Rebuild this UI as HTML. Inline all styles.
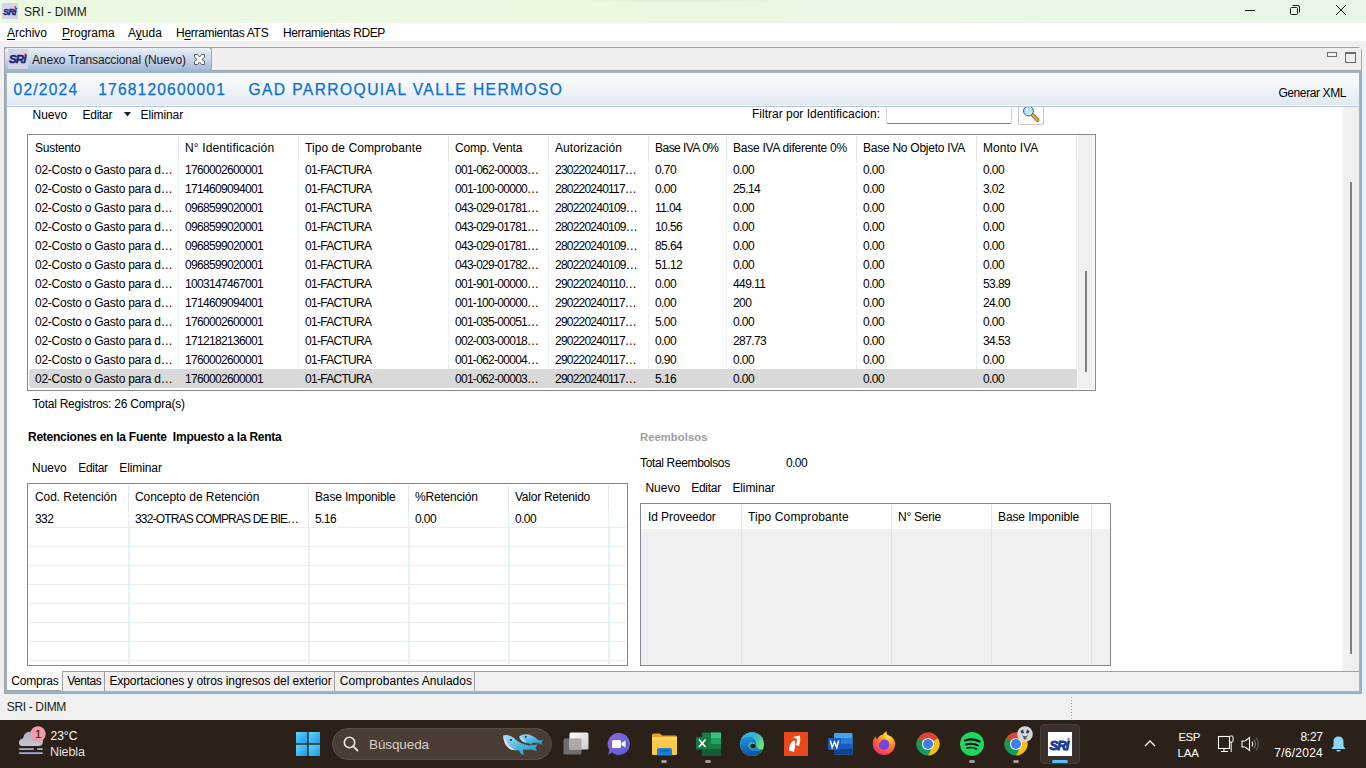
<!DOCTYPE html><html><head><meta charset="utf-8"><style>
html,body{margin:0;padding:0;width:1366px;height:768px;overflow:hidden;background:#f0f0f0;position:relative}
.t{position:absolute;white-space:nowrap;line-height:1;font-family:"Liberation Sans",sans-serif;color:#000}
.r{position:absolute;box-sizing:border-box}
svg{position:absolute;overflow:visible}
</style></head><body>
<div class="r" style="left:0px;top:0px;width:1366px;height:23px;background:linear-gradient(90deg,#ecf8e2,#edf8e1 45%,#eaf6e6 80%,#e9f5e9);"></div>
<div class="r" style="left:570px;top:0px;width:220px;height:3px;background:radial-gradient(ellipse at 50% 0%,rgba(0,0,0,0.06),rgba(0,0,0,0) 70%);"></div>
<svg style="left:2px;top:3px" width="16" height="16" viewBox="0 0 16 16"><rect x="0" y="0" width="16" height="16" fill="#d4d4e6"/><text x="1" y="11.5" font-family="Liberation Sans" font-weight="bold" font-style="italic" font-size="9" fill="#1a2278" stroke="#1a2278" stroke-width="0.4" letter-spacing="-0.7">SRi</text><circle cx="13.2" cy="4" r="0.9" fill="#e0302a"/></svg>
<div class="t" style="left:24px;top:5.84px;font-size:12px;color:#1a1a1a;">SRI - DIMM</div>
<div class="r" style="left:1245px;top:10px;width:10px;height:1px;background:#1a1a1a;"></div>
<svg style="left:1289px;top:4px" width="12" height="12" viewBox="0 0 12 12"><rect x="1.5" y="3.5" width="7" height="7" rx="1" fill="none" stroke="#1a1a1a" stroke-width="1"/><path d="M3.5 1.5 H9 Q10.5 1.5 10.5 3 V8.5" fill="none" stroke="#1a1a1a" stroke-width="1"/></svg>
<svg style="left:1336px;top:5px" width="10" height="10" viewBox="0 0 10 10"><path d="M0 0 L10 10 M10 0 L0 10" stroke="#1a1a1a" stroke-width="1"/></svg>
<div class="r" style="left:0px;top:23px;width:1366px;height:18px;background:#fff;"></div>
<div class="t" style="left:7px;top:26.84px;font-size:12px;"><u style="text-underline-offset:2px">A</u>rchivo</div>
<div class="t" style="left:62px;top:26.84px;font-size:12px;"><u style="text-underline-offset:2px">P</u>rograma</div>
<div class="t" style="left:128px;top:26.84px;font-size:12px;">A<u style="text-underline-offset:2px">y</u>uda</div>
<div class="t" style="left:176px;top:26.84px;font-size:12px;letter-spacing:-0.3px;">H<u style="text-underline-offset:2px">e</u>rramientas ATS</div>
<div class="t" style="left:283px;top:26.84px;font-size:12px;letter-spacing:-0.4px;">Herramientas RDEP</div>
<div class="r" style="left:4px;top:47px;width:1358px;height:647px;border:1px solid #a3a3a3;border-top-right-radius:4px;"></div>
<div class="r" style="left:5px;top:48px;width:1356px;height:23px;background:#efefef;"></div>
<div class="r" style="left:4px;top:47px;width:208px;height:25px;border-left:1px solid #a3a3a3;border-top:1px solid #a3a3a3;border-right:1px solid #a3a3a3;border-top-left-radius:3px;border-top-right-radius:3px;background:linear-gradient(#e9f0f9,#c6d5e8 50%,#9ab3d3);"></div>
<svg style="left:8px;top:49px" width="20" height="20" viewBox="0 0 20 20"><rect x="0" y="0" width="20" height="20" fill="#d6d3e3"/><text x="1" y="14.3" font-family="Liberation Sans" font-weight="bold" font-style="italic" font-size="11.5" fill="#1a2278" stroke="#1a2278" stroke-width="0.5" letter-spacing="-0.9">SRi</text><circle cx="17.3" cy="5.6" r="1.1" fill="#e0302a"/></svg>
<div class="t" style="left:32px;top:53.84px;font-size:12px;color:#1a1a1a;letter-spacing:-0.13px;">Anexo Transaccional (Nuevo)</div>
<svg style="left:194px;top:54px" width="11" height="11" viewBox="-0.5 -0.5 11 11"><path d="M0 0 H3 L5 2.6 L7 0 H10 V3 L7.4 5 L10 7 V10 H7 L5 7.4 L3 10 H0 V7 L2.6 5 L0 3 Z" fill="#fff" stroke="#5c5c5c" stroke-width="1" stroke-linejoin="miter"/></svg>
<div class="r" style="left:211px;top:70px;width:1150px;height:1px;background:#a3a3a3;"></div>
<div class="r" style="left:1327px;top:52px;width:10px;height:5px;border:1px solid #6a6a6a;"></div>
<div class="r" style="left:1345px;top:52px;width:11px;height:11px;border:1px solid #6a6a6a;border-top-width:2px;"></div>
<div class="r" style="left:5px;top:71px;width:1356px;height:622px;border:2px solid #99b4d1;border-bottom-width:2px;"></div>
<div class="r" style="left:7px;top:73px;width:1352px;height:32px;background:linear-gradient(#fdfeff,#f3f6fa 40%,#e3e9f2);"></div>
<div class="r" style="left:7px;top:105px;width:1352px;height:1px;background:#fbfcfe;"></div>
<div class="r" style="left:7px;top:106px;width:1352px;height:1px;background:#b2c7dd;"></div>
<div class="t" style="left:13.6px;top:82.29px;font-size:15.6px;color:#0a70d4;letter-spacing:1.2px;-webkit-text-stroke:0.25px #0a70d4;">02/2024</div>
<div class="t" style="left:98.3px;top:82.29px;font-size:15.6px;color:#0a70d4;letter-spacing:1.15px;-webkit-text-stroke:0.25px #0a70d4;">1768120600001</div>
<div class="t" style="left:248.4px;top:82.29px;font-size:15.6px;color:#0a70d4;letter-spacing:1.42px;-webkit-text-stroke:0.25px #0a70d4;">GAD PARROQUIAL VALLE HERMOSO</div>
<div class="t" style="left:1278.4px;top:86.84px;font-size:12px;letter-spacing:-0.4px;">Generar XML</div>
<div class="r" style="left:7px;top:107px;width:1336px;height:564px;background:#fff;"></div>
<div class="r" style="left:1343px;top:107px;width:16px;height:564px;background:#f0f0f0;"></div>
<div class="r" style="left:1350px;top:182px;width:2px;height:472px;background:#808080;"></div>
<div class="t" style="left:32.5px;top:108.84px;font-size:12px;">Nuevo</div>
<div class="t" style="left:82.6px;top:108.84px;font-size:12px;letter-spacing:-0.3px;">Editar</div>
<svg style="left:124px;top:112px" width="8" height="5" viewBox="0 0 8 5"><path d="M0 0 H7 L3.5 4.5 Z" fill="#222"/></svg>
<div class="t" style="left:140.5px;top:108.84px;font-size:12px;letter-spacing:-0.1px;">Eliminar</div>
<div class="t" style="left:752px;top:107.84px;font-size:12px;">Filtrar por Identificacion:</div>
<div class="r" style="left:886px;top:107px;width:126px;height:17px;background:#fff;border-left:1px solid #d5d5d5;border-right:1px solid #d5d5d5;border-bottom:1px solid #7a7a7a;border-bottom-left-radius:2px;border-bottom-right-radius:2px;"></div>
<div class="r" style="left:1018px;top:107px;width:26px;height:18px;background:#fdfdfd;border-left:1px solid #c8c8c8;border-right:1px solid #c8c8c8;border-bottom:1px solid #c8c8c8;border-bottom-left-radius:3px;border-bottom-right-radius:3px;"></div>
<div style="position:absolute;left:1010px;top:107px;width:40px;height:20px;overflow:hidden"><svg style="left:10px;top:-3px" width="22" height="20" viewBox="0 0 22 20"><defs><linearGradient id="mg" x1="0" y1="0" x2="1" y2="1"><stop offset="0" stop-color="#7fd0f6"/><stop offset="1" stop-color="#d8f8fc"/></linearGradient></defs><path d="M12.4 10.8 L17.6 16" stroke="#7a4a10" stroke-width="3.6" stroke-linecap="round"/><path d="M12.4 10.8 L17.6 16" stroke="#f0b040" stroke-width="2.2" stroke-linecap="round"/><circle cx="8.4" cy="7" r="4.9" fill="url(#mg)" stroke="#4b5b85" stroke-width="1"/><circle cx="7" cy="5.5" r="1.5" fill="#fff" opacity="0.6"/></svg></div>
<div class="r" style="left:27px;top:134px;width:1069px;height:257px;background:#fff;border:1px solid #828790;"></div>
<div class="t" style="left:35px;top:141.84px;font-size:12px;letter-spacing:-0.25px;">Sustento</div>
<div class="t" style="left:185px;top:141.84px;font-size:12px;letter-spacing:0.14px;">N° Identificación</div>
<div class="t" style="left:305px;top:141.84px;font-size:12px;letter-spacing:0.07px;">Tipo de Comprobante</div>
<div class="t" style="left:455px;top:141.84px;font-size:12px;letter-spacing:-0.2px;">Comp. Venta</div>
<div class="t" style="left:555px;top:141.84px;font-size:12px;letter-spacing:0.07px;">Autorización</div>
<div class="t" style="left:655px;top:141.84px;font-size:12px;letter-spacing:-0.52px;">Base IVA 0%</div>
<div class="t" style="left:733px;top:141.84px;font-size:12px;letter-spacing:-0.25px;">Base IVA diferente 0%</div>
<div class="t" style="left:863px;top:141.84px;font-size:12px;letter-spacing:-0.25px;">Base No Objeto IVA</div>
<div class="t" style="left:983px;top:141.84px;font-size:12px;letter-spacing:0.03px;">Monto IVA</div>
<div class="r" style="left:178px;top:136px;width:1px;height:24px;background:#e5e5e5;"></div>
<div class="r" style="left:178px;top:160px;width:1px;height:229px;background:#eaf2fb;"></div>
<div class="r" style="left:298px;top:136px;width:1px;height:24px;background:#e5e5e5;"></div>
<div class="r" style="left:298px;top:160px;width:1px;height:229px;background:#eaf2fb;"></div>
<div class="r" style="left:448px;top:136px;width:1px;height:24px;background:#e5e5e5;"></div>
<div class="r" style="left:448px;top:160px;width:1px;height:229px;background:#eaf2fb;"></div>
<div class="r" style="left:548px;top:136px;width:1px;height:24px;background:#e5e5e5;"></div>
<div class="r" style="left:548px;top:160px;width:1px;height:229px;background:#eaf2fb;"></div>
<div class="r" style="left:648px;top:136px;width:1px;height:24px;background:#e5e5e5;"></div>
<div class="r" style="left:648px;top:160px;width:1px;height:229px;background:#eaf2fb;"></div>
<div class="r" style="left:726px;top:136px;width:1px;height:24px;background:#e5e5e5;"></div>
<div class="r" style="left:726px;top:160px;width:1px;height:229px;background:#eaf2fb;"></div>
<div class="r" style="left:856px;top:136px;width:1px;height:24px;background:#e5e5e5;"></div>
<div class="r" style="left:856px;top:160px;width:1px;height:229px;background:#eaf2fb;"></div>
<div class="r" style="left:976px;top:136px;width:1px;height:24px;background:#e5e5e5;"></div>
<div class="r" style="left:976px;top:160px;width:1px;height:229px;background:#eaf2fb;"></div>
<div class="r" style="left:1076px;top:136px;width:1px;height:24px;background:#e5e5e5;"></div>
<div class="r" style="left:1076px;top:160px;width:1px;height:229px;background:#eaf2fb;"></div>
<div class="r" style="left:1078px;top:135px;width:16px;height:254px;background:#f0f0f0;"></div>
<div class="r" style="left:1085px;top:271px;width:2px;height:101px;background:#808080;"></div>
<div class="r" style="left:29px;top:369px;width:1048px;height:19px;background:#d9d9d9;border-radius:3px 0 0 3px;"></div>
<div class="t" style="left:35px;top:163.84px;font-size:12px;letter-spacing:-0.25px;">02-Costo o Gasto para d…</div>
<div class="t" style="left:185px;top:163.84px;font-size:12px;letter-spacing:-0.68px;">1760002600001</div>
<div class="t" style="left:305px;top:163.84px;font-size:12px;letter-spacing:-0.7px;">01-FACTURA</div>
<div class="t" style="left:455px;top:163.84px;font-size:12px;letter-spacing:-0.72px;">001-062-00003…</div>
<div class="t" style="left:555px;top:163.84px;font-size:12px;letter-spacing:-0.78px;">230220240117…</div>
<div class="t" style="left:655px;top:163.84px;font-size:12px;letter-spacing:-0.6px;">0.70</div>
<div class="t" style="left:733px;top:163.84px;font-size:12px;letter-spacing:-0.6px;">0.00</div>
<div class="t" style="left:863px;top:163.84px;font-size:12px;letter-spacing:-0.6px;">0.00</div>
<div class="t" style="left:983px;top:163.84px;font-size:12px;letter-spacing:-0.6px;">0.00</div>
<div class="t" style="left:35px;top:182.84px;font-size:12px;letter-spacing:-0.25px;">02-Costo o Gasto para d…</div>
<div class="t" style="left:185px;top:182.84px;font-size:12px;letter-spacing:-0.68px;">1714609094001</div>
<div class="t" style="left:305px;top:182.84px;font-size:12px;letter-spacing:-0.7px;">01-FACTURA</div>
<div class="t" style="left:455px;top:182.84px;font-size:12px;letter-spacing:-0.72px;">001-100-00000…</div>
<div class="t" style="left:555px;top:182.84px;font-size:12px;letter-spacing:-0.78px;">280220240117…</div>
<div class="t" style="left:655px;top:182.84px;font-size:12px;letter-spacing:-0.6px;">0.00</div>
<div class="t" style="left:733px;top:182.84px;font-size:12px;letter-spacing:-0.6px;">25.14</div>
<div class="t" style="left:863px;top:182.84px;font-size:12px;letter-spacing:-0.6px;">0.00</div>
<div class="t" style="left:983px;top:182.84px;font-size:12px;letter-spacing:-0.6px;">3.02</div>
<div class="t" style="left:35px;top:201.84px;font-size:12px;letter-spacing:-0.25px;">02-Costo o Gasto para d…</div>
<div class="t" style="left:185px;top:201.84px;font-size:12px;letter-spacing:-0.68px;">0968599020001</div>
<div class="t" style="left:305px;top:201.84px;font-size:12px;letter-spacing:-0.7px;">01-FACTURA</div>
<div class="t" style="left:455px;top:201.84px;font-size:12px;letter-spacing:-0.72px;">043-029-01781…</div>
<div class="t" style="left:555px;top:201.84px;font-size:12px;letter-spacing:-0.78px;">280220240109…</div>
<div class="t" style="left:655px;top:201.84px;font-size:12px;letter-spacing:-0.6px;">11.04</div>
<div class="t" style="left:733px;top:201.84px;font-size:12px;letter-spacing:-0.6px;">0.00</div>
<div class="t" style="left:863px;top:201.84px;font-size:12px;letter-spacing:-0.6px;">0.00</div>
<div class="t" style="left:983px;top:201.84px;font-size:12px;letter-spacing:-0.6px;">0.00</div>
<div class="t" style="left:35px;top:220.84px;font-size:12px;letter-spacing:-0.25px;">02-Costo o Gasto para d…</div>
<div class="t" style="left:185px;top:220.84px;font-size:12px;letter-spacing:-0.68px;">0968599020001</div>
<div class="t" style="left:305px;top:220.84px;font-size:12px;letter-spacing:-0.7px;">01-FACTURA</div>
<div class="t" style="left:455px;top:220.84px;font-size:12px;letter-spacing:-0.72px;">043-029-01781…</div>
<div class="t" style="left:555px;top:220.84px;font-size:12px;letter-spacing:-0.78px;">280220240109…</div>
<div class="t" style="left:655px;top:220.84px;font-size:12px;letter-spacing:-0.6px;">10.56</div>
<div class="t" style="left:733px;top:220.84px;font-size:12px;letter-spacing:-0.6px;">0.00</div>
<div class="t" style="left:863px;top:220.84px;font-size:12px;letter-spacing:-0.6px;">0.00</div>
<div class="t" style="left:983px;top:220.84px;font-size:12px;letter-spacing:-0.6px;">0.00</div>
<div class="t" style="left:35px;top:239.84px;font-size:12px;letter-spacing:-0.25px;">02-Costo o Gasto para d…</div>
<div class="t" style="left:185px;top:239.84px;font-size:12px;letter-spacing:-0.68px;">0968599020001</div>
<div class="t" style="left:305px;top:239.84px;font-size:12px;letter-spacing:-0.7px;">01-FACTURA</div>
<div class="t" style="left:455px;top:239.84px;font-size:12px;letter-spacing:-0.72px;">043-029-01781…</div>
<div class="t" style="left:555px;top:239.84px;font-size:12px;letter-spacing:-0.78px;">280220240109…</div>
<div class="t" style="left:655px;top:239.84px;font-size:12px;letter-spacing:-0.6px;">85.64</div>
<div class="t" style="left:733px;top:239.84px;font-size:12px;letter-spacing:-0.6px;">0.00</div>
<div class="t" style="left:863px;top:239.84px;font-size:12px;letter-spacing:-0.6px;">0.00</div>
<div class="t" style="left:983px;top:239.84px;font-size:12px;letter-spacing:-0.6px;">0.00</div>
<div class="t" style="left:35px;top:258.84px;font-size:12px;letter-spacing:-0.25px;">02-Costo o Gasto para d…</div>
<div class="t" style="left:185px;top:258.84px;font-size:12px;letter-spacing:-0.68px;">0968599020001</div>
<div class="t" style="left:305px;top:258.84px;font-size:12px;letter-spacing:-0.7px;">01-FACTURA</div>
<div class="t" style="left:455px;top:258.84px;font-size:12px;letter-spacing:-0.72px;">043-029-01782…</div>
<div class="t" style="left:555px;top:258.84px;font-size:12px;letter-spacing:-0.78px;">280220240109…</div>
<div class="t" style="left:655px;top:258.84px;font-size:12px;letter-spacing:-0.6px;">51.12</div>
<div class="t" style="left:733px;top:258.84px;font-size:12px;letter-spacing:-0.6px;">0.00</div>
<div class="t" style="left:863px;top:258.84px;font-size:12px;letter-spacing:-0.6px;">0.00</div>
<div class="t" style="left:983px;top:258.84px;font-size:12px;letter-spacing:-0.6px;">0.00</div>
<div class="t" style="left:35px;top:277.84px;font-size:12px;letter-spacing:-0.25px;">02-Costo o Gasto para d…</div>
<div class="t" style="left:185px;top:277.84px;font-size:12px;letter-spacing:-0.68px;">1003147467001</div>
<div class="t" style="left:305px;top:277.84px;font-size:12px;letter-spacing:-0.7px;">01-FACTURA</div>
<div class="t" style="left:455px;top:277.84px;font-size:12px;letter-spacing:-0.72px;">001-901-00000…</div>
<div class="t" style="left:555px;top:277.84px;font-size:12px;letter-spacing:-0.78px;">290220240110…</div>
<div class="t" style="left:655px;top:277.84px;font-size:12px;letter-spacing:-0.6px;">0.00</div>
<div class="t" style="left:733px;top:277.84px;font-size:12px;letter-spacing:-0.6px;">449.11</div>
<div class="t" style="left:863px;top:277.84px;font-size:12px;letter-spacing:-0.6px;">0.00</div>
<div class="t" style="left:983px;top:277.84px;font-size:12px;letter-spacing:-0.6px;">53.89</div>
<div class="t" style="left:35px;top:296.84px;font-size:12px;letter-spacing:-0.25px;">02-Costo o Gasto para d…</div>
<div class="t" style="left:185px;top:296.84px;font-size:12px;letter-spacing:-0.68px;">1714609094001</div>
<div class="t" style="left:305px;top:296.84px;font-size:12px;letter-spacing:-0.7px;">01-FACTURA</div>
<div class="t" style="left:455px;top:296.84px;font-size:12px;letter-spacing:-0.72px;">001-100-00000…</div>
<div class="t" style="left:555px;top:296.84px;font-size:12px;letter-spacing:-0.78px;">290220240117…</div>
<div class="t" style="left:655px;top:296.84px;font-size:12px;letter-spacing:-0.6px;">0.00</div>
<div class="t" style="left:733px;top:296.84px;font-size:12px;letter-spacing:-0.6px;">200</div>
<div class="t" style="left:863px;top:296.84px;font-size:12px;letter-spacing:-0.6px;">0.00</div>
<div class="t" style="left:983px;top:296.84px;font-size:12px;letter-spacing:-0.6px;">24.00</div>
<div class="t" style="left:35px;top:315.84px;font-size:12px;letter-spacing:-0.25px;">02-Costo o Gasto para d…</div>
<div class="t" style="left:185px;top:315.84px;font-size:12px;letter-spacing:-0.68px;">1760002600001</div>
<div class="t" style="left:305px;top:315.84px;font-size:12px;letter-spacing:-0.7px;">01-FACTURA</div>
<div class="t" style="left:455px;top:315.84px;font-size:12px;letter-spacing:-0.72px;">001-035-00051…</div>
<div class="t" style="left:555px;top:315.84px;font-size:12px;letter-spacing:-0.78px;">290220240117…</div>
<div class="t" style="left:655px;top:315.84px;font-size:12px;letter-spacing:-0.6px;">5.00</div>
<div class="t" style="left:733px;top:315.84px;font-size:12px;letter-spacing:-0.6px;">0.00</div>
<div class="t" style="left:863px;top:315.84px;font-size:12px;letter-spacing:-0.6px;">0.00</div>
<div class="t" style="left:983px;top:315.84px;font-size:12px;letter-spacing:-0.6px;">0.00</div>
<div class="t" style="left:35px;top:334.84px;font-size:12px;letter-spacing:-0.25px;">02-Costo o Gasto para d…</div>
<div class="t" style="left:185px;top:334.84px;font-size:12px;letter-spacing:-0.68px;">1712182136001</div>
<div class="t" style="left:305px;top:334.84px;font-size:12px;letter-spacing:-0.7px;">01-FACTURA</div>
<div class="t" style="left:455px;top:334.84px;font-size:12px;letter-spacing:-0.72px;">002-003-00018…</div>
<div class="t" style="left:555px;top:334.84px;font-size:12px;letter-spacing:-0.78px;">290220240117…</div>
<div class="t" style="left:655px;top:334.84px;font-size:12px;letter-spacing:-0.6px;">0.00</div>
<div class="t" style="left:733px;top:334.84px;font-size:12px;letter-spacing:-0.6px;">287.73</div>
<div class="t" style="left:863px;top:334.84px;font-size:12px;letter-spacing:-0.6px;">0.00</div>
<div class="t" style="left:983px;top:334.84px;font-size:12px;letter-spacing:-0.6px;">34.53</div>
<div class="t" style="left:35px;top:353.84px;font-size:12px;letter-spacing:-0.25px;">02-Costo o Gasto para d…</div>
<div class="t" style="left:185px;top:353.84px;font-size:12px;letter-spacing:-0.68px;">1760002600001</div>
<div class="t" style="left:305px;top:353.84px;font-size:12px;letter-spacing:-0.7px;">01-FACTURA</div>
<div class="t" style="left:455px;top:353.84px;font-size:12px;letter-spacing:-0.72px;">001-062-00004…</div>
<div class="t" style="left:555px;top:353.84px;font-size:12px;letter-spacing:-0.78px;">290220240117…</div>
<div class="t" style="left:655px;top:353.84px;font-size:12px;letter-spacing:-0.6px;">0.90</div>
<div class="t" style="left:733px;top:353.84px;font-size:12px;letter-spacing:-0.6px;">0.00</div>
<div class="t" style="left:863px;top:353.84px;font-size:12px;letter-spacing:-0.6px;">0.00</div>
<div class="t" style="left:983px;top:353.84px;font-size:12px;letter-spacing:-0.6px;">0.00</div>
<div class="t" style="left:35px;top:372.84px;font-size:12px;letter-spacing:-0.25px;">02-Costo o Gasto para d…</div>
<div class="t" style="left:185px;top:372.84px;font-size:12px;letter-spacing:-0.68px;">1760002600001</div>
<div class="t" style="left:305px;top:372.84px;font-size:12px;letter-spacing:-0.7px;">01-FACTURA</div>
<div class="t" style="left:455px;top:372.84px;font-size:12px;letter-spacing:-0.72px;">001-062-00003…</div>
<div class="t" style="left:555px;top:372.84px;font-size:12px;letter-spacing:-0.78px;">290220240117…</div>
<div class="t" style="left:655px;top:372.84px;font-size:12px;letter-spacing:-0.6px;">5.16</div>
<div class="t" style="left:733px;top:372.84px;font-size:12px;letter-spacing:-0.6px;">0.00</div>
<div class="t" style="left:863px;top:372.84px;font-size:12px;letter-spacing:-0.6px;">0.00</div>
<div class="t" style="left:983px;top:372.84px;font-size:12px;letter-spacing:-0.6px;">0.00</div>
<div class="t" style="left:32.5px;top:397.84px;font-size:12px;letter-spacing:-0.25px;">Total Registros: 26 Compra(s)</div>
<div class="t" style="left:28px;top:430.84px;font-size:12px;font-weight:bold;letter-spacing:-0.25px;">Retenciones en la Fuente&nbsp; Impuesto a la Renta</div>
<div class="t" style="left:32px;top:461.84px;font-size:12px;">Nuevo</div>
<div class="t" style="left:78.2px;top:461.84px;font-size:12px;letter-spacing:-0.3px;">Editar</div>
<div class="t" style="left:119.3px;top:461.84px;font-size:12px;letter-spacing:-0.1px;">Eliminar</div>
<div class="r" style="left:27px;top:483px;width:601px;height:183px;background:#fff;border:1px solid #828790;"></div>
<div class="t" style="left:35px;top:491.34px;font-size:12px;letter-spacing:-0.07px;">Cod. Retención</div>
<div class="t" style="left:135px;top:491.34px;font-size:12px;letter-spacing:-0.05px;">Concepto de Retención</div>
<div class="t" style="left:315px;top:491.34px;font-size:12px;letter-spacing:-0.15px;">Base Imponible</div>
<div class="t" style="left:415px;top:491.34px;font-size:12px;letter-spacing:-0.2px;">%Retención</div>
<div class="t" style="left:515px;top:491.34px;font-size:12px;letter-spacing:-0.25px;">Valor Retenido</div>
<div class="r" style="left:128px;top:485px;width:1px;height:24px;background:#e5e5e5;"></div>
<div class="r" style="left:128px;top:509px;width:1px;height:155px;background:#e6f0fb;"></div>
<div class="r" style="left:129px;top:527px;width:1px;height:137px;background:#efefef;"></div>
<div class="r" style="left:308px;top:485px;width:1px;height:24px;background:#e5e5e5;"></div>
<div class="r" style="left:308px;top:509px;width:1px;height:155px;background:#e6f0fb;"></div>
<div class="r" style="left:309px;top:527px;width:1px;height:137px;background:#efefef;"></div>
<div class="r" style="left:408px;top:485px;width:1px;height:24px;background:#e5e5e5;"></div>
<div class="r" style="left:408px;top:509px;width:1px;height:155px;background:#e6f0fb;"></div>
<div class="r" style="left:409px;top:527px;width:1px;height:137px;background:#efefef;"></div>
<div class="r" style="left:508px;top:485px;width:1px;height:24px;background:#e5e5e5;"></div>
<div class="r" style="left:508px;top:509px;width:1px;height:155px;background:#e6f0fb;"></div>
<div class="r" style="left:509px;top:527px;width:1px;height:137px;background:#efefef;"></div>
<div class="r" style="left:608px;top:485px;width:1px;height:24px;background:#e5e5e5;"></div>
<div class="r" style="left:608px;top:509px;width:1px;height:155px;background:#e6f0fb;"></div>
<div class="r" style="left:609px;top:527px;width:1px;height:137px;background:#efefef;"></div>
<div class="r" style="left:28px;top:527px;width:598px;height:1px;background:#ededed;"></div>
<div class="r" style="left:28px;top:546px;width:598px;height:1px;background:#ededed;"></div>
<div class="r" style="left:28px;top:565px;width:598px;height:1px;background:#ededed;"></div>
<div class="r" style="left:28px;top:584px;width:598px;height:1px;background:#ededed;"></div>
<div class="r" style="left:28px;top:603px;width:598px;height:1px;background:#ededed;"></div>
<div class="r" style="left:28px;top:622px;width:598px;height:1px;background:#ededed;"></div>
<div class="r" style="left:28px;top:641px;width:598px;height:1px;background:#ededed;"></div>
<div class="r" style="left:28px;top:660px;width:598px;height:1px;background:#ededed;"></div>
<div class="t" style="left:35px;top:512.84px;font-size:12px;letter-spacing:-0.6px;">332</div>
<div class="t" style="left:135px;top:512.84px;font-size:12px;letter-spacing:-0.83px;">332-OTRAS COMPRAS DE BIE…</div>
<div class="t" style="left:315px;top:512.84px;font-size:12px;letter-spacing:-0.6px;">5.16</div>
<div class="t" style="left:415px;top:512.84px;font-size:12px;letter-spacing:-0.6px;">0.00</div>
<div class="t" style="left:515px;top:512.84px;font-size:12px;letter-spacing:-0.6px;">0.00</div>
<div class="t" style="left:640px;top:431.52px;font-size:11.2px;color:#9c9c9c;font-weight:bold;letter-spacing:0.1px;">Reembolsos</div>
<div class="t" style="left:640px;top:456.84px;font-size:12px;letter-spacing:-0.35px;">Total Reembolsos</div>
<div class="t" style="left:786px;top:456.84px;font-size:12px;letter-spacing:-0.6px;">0.00</div>
<div class="t" style="left:645.4px;top:481.84px;font-size:12px;">Nuevo</div>
<div class="t" style="left:691.3px;top:481.84px;font-size:12px;letter-spacing:-0.3px;">Editar</div>
<div class="t" style="left:732.4px;top:481.84px;font-size:12px;letter-spacing:-0.1px;">Eliminar</div>
<div class="r" style="left:640px;top:503px;width:471px;height:163px;background:#f0f0f0;border:1px solid #828790;"></div>
<div class="r" style="left:641px;top:504px;width:469px;height:25px;background:#fff;"></div>
<div class="t" style="left:648px;top:510.84px;font-size:12px;letter-spacing:-0.08px;">Id Proveedor</div>
<div class="t" style="left:748px;top:510.84px;font-size:12px;letter-spacing:0.12px;">Tipo Comprobante</div>
<div class="t" style="left:898px;top:510.84px;font-size:12px;letter-spacing:-0.25px;">N° Serie</div>
<div class="t" style="left:998px;top:510.84px;font-size:12px;letter-spacing:-0.11px;">Base Imponible</div>
<div class="r" style="left:741px;top:505px;width:1px;height:24px;background:#e5e5e5;"></div>
<div class="r" style="left:741px;top:529px;width:1px;height:135px;background:#dde6f0;"></div>
<div class="r" style="left:891px;top:505px;width:1px;height:24px;background:#e5e5e5;"></div>
<div class="r" style="left:891px;top:529px;width:1px;height:135px;background:#dde6f0;"></div>
<div class="r" style="left:991px;top:505px;width:1px;height:24px;background:#e5e5e5;"></div>
<div class="r" style="left:991px;top:529px;width:1px;height:135px;background:#dde6f0;"></div>
<div class="r" style="left:1091px;top:505px;width:1px;height:24px;background:#e5e5e5;"></div>
<div class="r" style="left:1091px;top:529px;width:1px;height:135px;background:#dde6f0;"></div>
<div class="r" style="left:7px;top:671px;width:55px;height:20px;background:#fff;"></div>
<div class="r" style="left:7px;top:690px;width:54px;height:1px;background:#a0a0a0;"></div>
<div class="r" style="left:62px;top:671px;width:1297px;height:1px;background:#a0a0a0;"></div>
<div class="r" style="left:62px;top:672px;width:1297px;height:19px;background:#f0f0f0;"></div>
<div class="r" style="left:62px;top:671px;width:1px;height:20px;background:#a0a0a0;"></div>
<div class="r" style="left:104px;top:671px;width:1px;height:20px;background:#a0a0a0;"></div>
<div class="r" style="left:334px;top:671px;width:1px;height:20px;background:#a0a0a0;"></div>
<div class="r" style="left:474px;top:671px;width:1px;height:20px;background:#a0a0a0;"></div>
<div class="t" style="left:11.2px;top:674.84px;font-size:12px;letter-spacing:-0.2px;">Compras</div>
<div class="t" style="left:67.2px;top:674.84px;font-size:12px;letter-spacing:-0.45px;">Ventas</div>
<div class="t" style="left:109.5px;top:674.84px;font-size:12px;letter-spacing:-0.11px;">Exportaciones y otros ingresos del exterior</div>
<div class="t" style="left:339.8px;top:674.84px;font-size:12px;letter-spacing:0.04px;">Comprobantes Anulados</div>
<div class="t" style="left:6.8px;top:700.84px;font-size:12px;color:#1a1a1a;letter-spacing:-0.35px;">SRI - DIMM</div>
<div class="r" style="left:1071px;top:697px;width:1px;height:1px;background:#a0a0a0;"></div>
<div class="r" style="left:1071px;top:700px;width:1px;height:1px;background:#a0a0a0;"></div>
<div class="r" style="left:1071px;top:703px;width:1px;height:1px;background:#a0a0a0;"></div>
<div class="r" style="left:1071px;top:706px;width:1px;height:1px;background:#a0a0a0;"></div>
<div class="r" style="left:1071px;top:709px;width:1px;height:1px;background:#a0a0a0;"></div>
<div class="r" style="left:1071px;top:712px;width:1px;height:1px;background:#a0a0a0;"></div>
<div class="r" style="left:1071px;top:715px;width:1px;height:1px;background:#a0a0a0;"></div>
<div class="r" style="left:1071px;top:718px;width:1px;height:1px;background:#a0a0a0;"></div>
<div class="r" style="left:0px;top:720px;width:1366px;height:48px;background:#2c2118;"></div>
<svg style="left:16px;top:727px" width="32" height="30" viewBox="0 0 32 30"><defs><linearGradient id="cl" x1="0" y1="0" x2="0" y2="1"><stop offset="0" stop-color="#a4b0c4"/><stop offset="1" stop-color="#c8c8c6"/></linearGradient></defs><path d="M6 19 Q3 19 3 15.5 Q3 12 7 11.5 Q8 4.5 14.5 4.5 Q19.5 4.5 21.5 9 Q27 9 27 14 Q27 19 22.5 19 Z" fill="url(#cl)"/><rect x="3" y="21.2" width="15" height="1.8" rx="0.9" fill="#9fb2d2"/><rect x="21" y="21.2" width="6" height="1.8" rx="0.9" fill="#9fb2d2"/><rect x="3" y="25.2" width="24" height="1.8" rx="0.9" fill="#9fb2d2"/><circle cx="22" cy="7" r="7.7" fill="#f59aa5"/><text x="19" y="11.3" font-family="Liberation Sans" font-size="11.5" fill="#111">1</text></svg>
<div class="t" style="left:50.5px;top:730.14px;font-size:12px;color:#ffffff;">23°C</div>
<div class="t" style="left:50px;top:745.92px;font-size:12.5px;color:#e6e0dc;letter-spacing:-0.1px;">Niebla</div>
<svg style="left:296px;top:732px" width="24" height="24" viewBox="0 0 24 24"><defs><linearGradient id="wl" x1="0" y1="0" x2="1" y2="1"><stop offset="0" stop-color="#5fd4fb"/><stop offset="1" stop-color="#1a9be6"/></linearGradient></defs><rect x="0" y="0" width="11.3" height="11.3" fill="url(#wl)"/><rect x="12.7" y="0" width="11.3" height="11.3" fill="url(#wl)"/><rect x="0" y="12.7" width="11.3" height="11.3" fill="url(#wl)"/><rect x="12.7" y="12.7" width="11.3" height="11.3" fill="url(#wl)"/></svg>
<div class="r" style="left:332px;top:728px;width:220px;height:32px;background:#4a3d34;border-radius:16px;border:1px solid #5a4c42;"></div>
<svg style="left:343px;top:736px" width="16" height="16" viewBox="0 0 16 16"><circle cx="6.5" cy="6.5" r="5.2" fill="none" stroke="#e8e4e0" stroke-width="1.6"/><path d="M10.3 10.3 L14.5 14.5" stroke="#e8e4e0" stroke-width="1.8" stroke-linecap="round"/></svg>
<div class="t" style="left:369px;top:738.07px;font-size:13.5px;color:#d6d0cb;letter-spacing:-0.1px;">Búsqueda</div>
<svg style="left:490px;top:725px" width="60" height="36" viewBox="0 0 60 36"><defs><linearGradient id="wh" x1="0" y1="0" x2="1" y2="1"><stop offset="0" stop-color="#a8e2f8"/><stop offset="0.5" stop-color="#4fb8e2"/><stop offset="1" stop-color="#2593c4"/></linearGradient></defs><path d="M13 10.5 Q19 9 24 13 Q29 18.5 39 20.5 L47.5 19.5 L45.5 22.5 L47 26 L41 24.5 Q36 25 33 24.5 L33.5 30 L31.5 29.5 L28.5 25 Q24 26.5 20 23.5 Q15 18 13 10.5 Z" fill="url(#wh)"/><path d="M13 11 Q14 20 19 23.5 Q21.5 25.5 25 25 Q18 21 16 15 Z" fill="#e4daf2"/><circle cx="21" cy="15" r="1.1" fill="#3a1f4a"/><path d="M29 11.5 Q33 8.5 39 9.5 Q45 11.5 49 15.5 L53 15 L51.5 17.5 L52.5 20 L49 18.5 Q45 17.5 42 18 L41.5 20 L39.5 18.5 Q35 18.5 32 16.5 Q30 14.5 29 11.5 Z" fill="url(#wh)"/><path d="M29.5 12 Q32 17 37 17.5 Q33 14.5 31 12 Z" fill="#e4daf2"/><circle cx="35.8" cy="11.8" r="1" fill="#3a1f4a"/></svg>
<svg style="left:563px;top:732px" width="26" height="23" viewBox="0 0 26 23"><defs><linearGradient id="tv" x1="0" y1="0" x2="1" y2="1"><stop offset="0" stop-color="#ffffff"/><stop offset="1" stop-color="#c9c9c9"/></linearGradient></defs><rect x="0.5" y="6.5" width="18" height="16" rx="1.5" fill="#6e6e6e"/><rect x="6.5" y="0.5" width="19" height="17" rx="1.5" fill="url(#tv)"/><rect x="6.5" y="6.5" width="12" height="11" fill="#a9a9a9"/></svg>
<svg style="left:607px;top:732px" width="24" height="24" viewBox="0 0 24 24"><defs><linearGradient id="tm" x1="0" y1="0" x2="1" y2="1"><stop offset="0" stop-color="#8b6bd6"/><stop offset="1" stop-color="#5a5ad9"/></linearGradient></defs><path d="M12 1 A11 11 0 1 1 5 20.5 L1 23 L2.5 18 A11 11 0 0 1 12 1 Z" fill="url(#tm)"/><rect x="5" y="8" width="9" height="8" rx="1.5" fill="#fff"/><path d="M14.5 11 L18.5 8.5 V15.5 L14.5 13 Z" fill="#fff"/></svg>
<svg style="left:652px;top:733px" width="25" height="23" viewBox="0 0 25 23"><path d="M0 2 Q0 0.5 1.5 0.5 H8 L10 2.5 H23.5 Q25 2.5 25 4 V8 H0 Z" fill="#e5a722"/><rect x="0" y="4" width="25" height="18" rx="1" fill="#fbc94a"/><rect x="0" y="4" width="25" height="3" fill="#fdd766"/><rect x="5" y="15" width="15" height="7.5" rx="1.5" fill="#1b7fd6"/><rect x="8" y="17" width="9" height="1.5" fill="#0f5fb0"/></svg>
<div class="r" style="left:661px;top:760px;width:6px;height:3px;background:#9d9995;border-radius:2px;"></div>
<svg style="left:696px;top:732px" width="25" height="24" viewBox="0 0 25 24"><rect x="6" y="0.5" width="19" height="23" rx="1" fill="#1a7b45"/><rect x="15" y="0.5" width="10" height="6" fill="#33c481"/><rect x="15" y="6.5" width="10" height="5.5" fill="#21a366"/><rect x="6" y="17" width="19" height="6.5" fill="#185c37"/><rect x="0" y="5" width="12.5" height="12.5" rx="1" fill="#107c41"/><path d="M3 7.5 L9.5 15 M9.5 7.5 L3 15" stroke="#fff" stroke-width="1.8"/></svg>
<div class="r" style="left:705px;top:760px;width:6px;height:3px;background:#9d9995;border-radius:2px;"></div>
<svg style="left:740px;top:732px" width="24" height="24" viewBox="0 0 24 24"><defs><linearGradient id="eg" x1="0" y1="0" x2="1" y2="0.6"><stop offset="0" stop-color="#2fb8f2"/><stop offset="0.55" stop-color="#39b6c8"/><stop offset="1" stop-color="#7be86a"/></linearGradient><linearGradient id="eb" x1="0" y1="0" x2="0.3" y2="1"><stop offset="0" stop-color="#1f9be6"/><stop offset="1" stop-color="#0b53a0"/></linearGradient></defs><circle cx="12" cy="12" r="12" fill="url(#eg)"/><path d="M0.2 11 Q1 4 9 4.5 Q15 5 16 11 L16 13 Q14 9.5 11 10 Q8 10.8 8.5 14 Q9.5 18.5 15 19 Q19 19.2 22.5 17 Q19.5 24 11.5 24 Q0.5 23.5 0.2 11 Z" fill="url(#eb)"/><path d="M16 13 Q16 16 13 16.5 Q10.5 16.5 10 14 Q10.5 11.5 13 11.8 Q15 12 16 13 Z" fill="#2b2118"/><path d="M16 13 Q17 18 22.5 17 Q20 19.5 15 19 Q11 18.5 10 15.5 Q12 17.5 14.5 16.5 Q16 15.5 16 13 Z" fill="#1c7fd0"/></svg>
<svg style="left:784px;top:732px" width="24" height="24" viewBox="0 0 24 24"><rect width="24" height="24" fill="#e8481c"/><path d="M9 5 L16 3.5 Q17 9 15 14 L12 13 Q13 10 13 7 Z" fill="#fff"/><path d="M8.5 9 L11 8.5 Q12 14 10 20 L5 18.5 Q5 13 8.5 9 Z" fill="#fff"/></svg>
<svg style="left:828px;top:733px" width="25" height="22" viewBox="0 0 25 22"><rect x="6" y="0" width="18.5" height="21.5" rx="1" fill="#41a5ee"/><rect x="6" y="5" width="18.5" height="5.5" fill="#2b7cd3"/><rect x="6" y="10.5" width="18.5" height="5.5" fill="#185abd"/><rect x="6" y="16" width="18.5" height="5.5" fill="#103f91"/><rect x="0" y="5" width="13" height="12" rx="1" fill="#185abd"/><path d="M2.3 7.5 L4.2 14.5 L6.5 9 L8.8 14.5 L10.7 7.5" stroke="#fff" stroke-width="1.5" fill="none"/></svg>
<svg style="left:872px;top:731px" width="24" height="25" viewBox="0 0 24 25"><defs><radialGradient id="ff" cx="0.7" cy="0.2" r="1"><stop offset="0" stop-color="#ffe34a"/><stop offset="0.35" stop-color="#ff9a23"/><stop offset="0.7" stop-color="#ff4a4a"/><stop offset="1" stop-color="#e3178f"/></radialGradient></defs><path d="M12 24 A11.5 11.5 0 0 1 0.8 11 Q1.5 7 4 5 Q4 8 5 8.5 Q7 4 11 3.5 Q12 1 15 0 Q14 3 16 4 Q22 6 23.3 12 A11.5 11.5 0 0 1 12 24 Z" fill="url(#ff)"/><circle cx="12" cy="13.5" r="5.3" fill="#7542e5"/><path d="M6.5 11 Q9 8 13 8.3 Q9 9 8 12 Z" fill="#ff8a2a"/></svg>
<svg style="left:916px;top:732px" width="24" height="24" viewBox="-12 -12 24 24"><path d="M0 -11.5 A11.5 11.5 0 0 1 9.96 5.75 L4.33 2.5 A6 6 0 0 0 0 -6 Z M0 -11.5 A11.5 11.5 0 0 0 -9.96 5.75 L-4.33 2.5 A5 5 0 0 1 0 -5 Z" fill="#db4437"/><path d="M-9.96 -5.75 A11.5 11.5 0 0 0 0 11.5 L4.33 2.5 A5 5 0 0 1 -4.33 -2.5 Z" fill="#0f9d58"/><path d="M9.96 -5.75 A11.5 11.5 0 0 1 0 11.5 L4.33 2.5 A5 5 0 0 0 4.33 -2.5 Z" fill="#f4c20d"/><path d="M0 -11.5 A11.5 11.5 0 0 1 9.96 -5.75 L0 -5 Z" fill="#db4437"/><circle r="6.1" fill="#fff"/><circle r="5" fill="#3d7ff0"/></svg>
<svg style="left:1004px;top:732px" width="24" height="24" viewBox="-12 -12 24 24"><path d="M0 -11.5 A11.5 11.5 0 0 1 9.96 5.75 L4.33 2.5 A6 6 0 0 0 0 -6 Z M0 -11.5 A11.5 11.5 0 0 0 -9.96 5.75 L-4.33 2.5 A5 5 0 0 1 0 -5 Z" fill="#db4437"/><path d="M-9.96 -5.75 A11.5 11.5 0 0 0 0 11.5 L4.33 2.5 A5 5 0 0 1 -4.33 -2.5 Z" fill="#0f9d58"/><path d="M9.96 -5.75 A11.5 11.5 0 0 1 0 11.5 L4.33 2.5 A5 5 0 0 0 4.33 -2.5 Z" fill="#f4c20d"/><path d="M0 -11.5 A11.5 11.5 0 0 1 9.96 -5.75 L0 -5 Z" fill="#db4437"/><circle r="6.1" fill="#fff"/><circle r="5" fill="#3d7ff0"/></svg>
<div class="r" style="left:1013px;top:760px;width:6px;height:3px;background:#9d9995;border-radius:2px;"></div>
<svg style="left:1017px;top:726px" width="16" height="16" viewBox="0 0 16 16"><circle cx="8" cy="8" r="7.8" fill="#d6d6dc"/><path d="M3.5 5 L6 3.5 L7 7 L4.5 7.5 Z M12.5 5 L10 3.5 L9 7 L11.5 7.5 Z" fill="#2a3a5a"/><path d="M5 9 Q8 15 11 9 Q8 11.5 5 9 Z" fill="#4a4a50"/><circle cx="8" cy="12" r="1.6" fill="#5a5a60"/></svg>
<svg style="left:960px;top:732px" width="24" height="24" viewBox="0 0 24 24"><circle cx="12" cy="12" r="12" fill="#1ed760"/><path d="M5 8.5 Q12.5 6 19.5 9.5" stroke="#111" stroke-width="2.2" fill="none" stroke-linecap="round"/><path d="M6 12.5 Q12 10.5 18 13.5" stroke="#111" stroke-width="1.9" fill="none" stroke-linecap="round"/><path d="M7 16 Q12 14.5 16.5 17" stroke="#111" stroke-width="1.6" fill="none" stroke-linecap="round"/></svg>
<div class="r" style="left:969px;top:760px;width:6px;height:3px;background:#9d9995;border-radius:2px;"></div>
<div class="r" style="left:1040px;top:724px;width:40px;height:40px;background:#3a302b;border-radius:4px;border:1px solid #463c36;"></div>
<svg style="left:1048px;top:732px" width="24" height="24" viewBox="0 0 24 24"><rect width="24" height="24" fill="#fff"/><text x="1.5" y="17.5" font-family="Liberation Sans" font-weight="bold" font-style="italic" font-size="13" fill="#173a9a" stroke="#173a9a" stroke-width="0.9" letter-spacing="-0.9">SRi</text><circle cx="20.5" cy="7" r="1.1" fill="#e0302a"/></svg>
<div class="r" style="left:1052px;top:760px;width:16px;height:3px;background:#4cc2ff;border-radius:2px;"></div>
<svg style="left:1144px;top:740px" width="12" height="7" viewBox="0 0 12 7"><path d="M1 6 L6 1 L11 6" stroke="#fff" stroke-width="1.4" fill="none"/></svg>
<div class="t" style="left:1178.5px;top:732.27px;font-size:11.5px;color:#ffffff;letter-spacing:-0.6px;">ESP</div>
<div class="t" style="left:1177.5px;top:748.27px;font-size:11.5px;color:#ffffff;letter-spacing:-0.2px;">LAA</div>
<svg style="left:1217px;top:735px" width="18" height="18" viewBox="0 0 18 18"><rect x="1.5" y="1.5" width="11" height="12" fill="none" stroke="#fff" stroke-width="1.1"/><path d="M7 13.5 V16 M4 16.5 H11" stroke="#fff" stroke-width="1.1"/><rect x="12.5" y="1" width="3.5" height="6" rx="1" fill="#2c2118" stroke="#fff" stroke-width="1"/><path d="M14.2 7 V17" stroke="#fff" stroke-width="1"/></svg>
<svg style="left:1241px;top:736px" width="18" height="16" viewBox="0 0 18 16"><path d="M1 5 H4 L8.5 1.5 V14.5 L4 11 H1 Z" fill="none" stroke="#fff" stroke-width="1.1"/><path d="M11 5.5 Q12.5 8 11 10.5" stroke="#fff" stroke-width="1.1" fill="none"/><path d="M13 3.5 Q16 8 13 12.5" stroke="#8d8580" stroke-width="1" fill="none"/><path d="M15 1.5 Q19.5 8 15 14.5" stroke="#6d6560" stroke-width="1" fill="none"/></svg>
<div class="t" style="left:1300.5px;top:730.84px;font-size:12px;color:#ffffff;letter-spacing:-0.3px;">8:27</div>
<div class="t" style="left:1274.3px;top:746.84px;font-size:12px;color:#ffffff;letter-spacing:0.25px;">7/6/2024</div>
<svg style="left:1331px;top:736px" width="15" height="17" viewBox="0 0 15 17"><path d="M7.5 0.5 Q12.5 0.5 12.5 6 V10 L14.5 13 H0.5 L2.5 10 V6 Q2.5 0.5 7.5 0.5 Z" fill="#89d8f8"/><path d="M5 14 Q7.5 17.5 10 14 Z" fill="#89d8f8"/></svg>
</body></html>
